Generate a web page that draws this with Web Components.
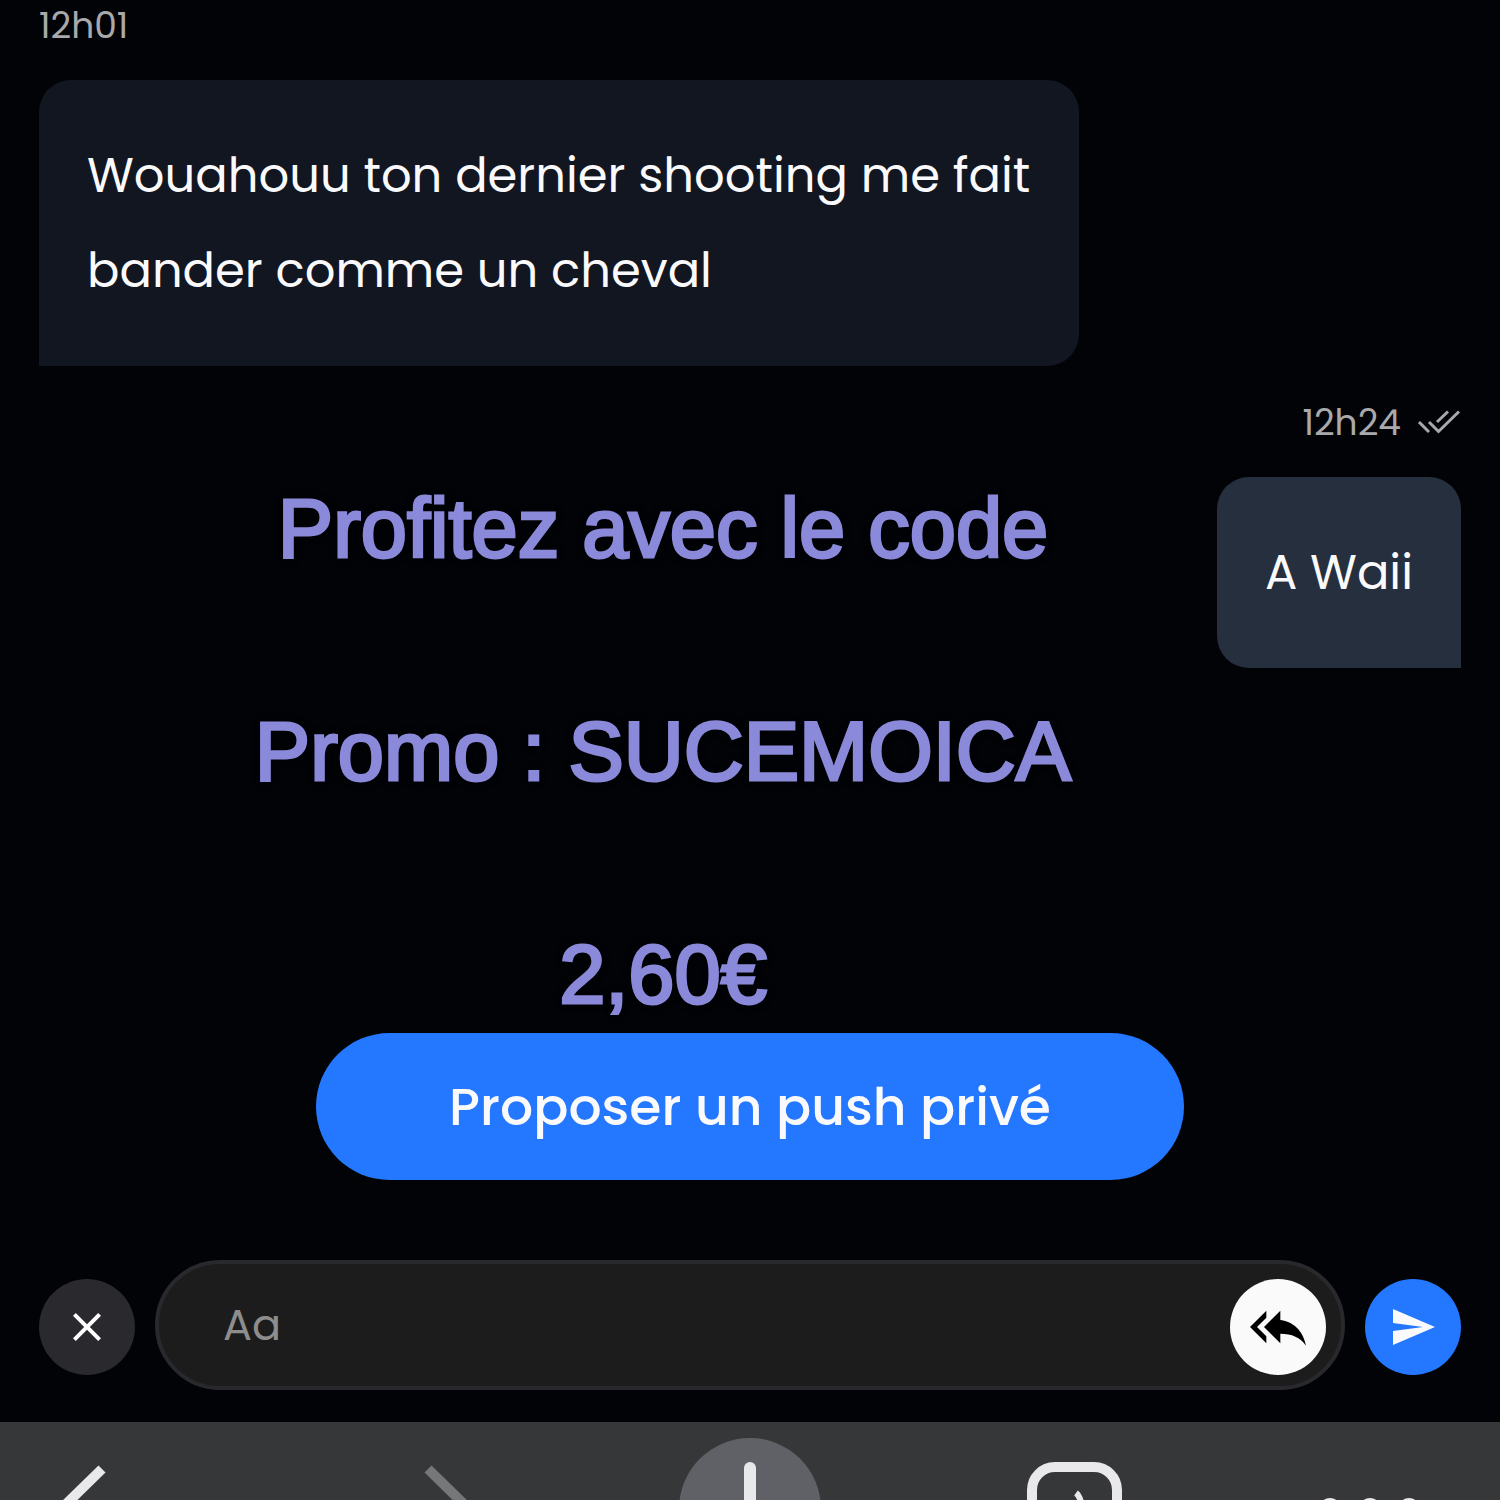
<!DOCTYPE html>
<html lang="fr">
<head>
<meta charset="utf-8">
<meta name="viewport" content="width=device-width, initial-scale=1">
<title>Messages</title>
<style>
  body { margin: 0; background: #020307; }
</style>
</head>
<body>
<chat-page>
  <chat-message time="12h01">Wouahouu ton dernier shooting me fait bander comme un cheval</chat-message>
  <chat-message time="12h24" sent>A Waii</chat-message>
  <promo-overlay slot="overlay">
    <span>Profitez avec le code</span>
    <span>Promo : SUCEMOICA</span>
    <span>2,60€</span>
  </promo-overlay>
  <push-button slot="footer">Proposer un push privé</push-button>
  <chat-composer slot="footer"></chat-composer>
  <browser-bar slot="bar"></browser-bar>
</chat-page>
<script>
const define = (name, html) => customElements.define(name, class extends HTMLElement {
  constructor() {
    super();
    this.attachShadow({ mode: 'open' }).innerHTML = html;
  }
  connectedCallback() {
    const time = this.shadowRoot.querySelector('time');
    if (time) time.textContent = this.getAttribute('time');
  }
});

define('chat-page', `
<style>
  :host { display: flex; flex-direction: column; height: 100vh; overflow: hidden; position: relative;
    background: #020307; color: #fafafc; font-family: Poppins, Inter, sans-serif; }
  main { flex: 1; min-height: 0; padding: 0 39px; display: flex; flex-direction: column; gap: 31px; }
  footer { padding: 0 39px 32px; display: flex; flex-direction: column; align-items: center; gap: 80px; }
</style>
<main><slot></slot></main>
<slot name="overlay"></slot>
<footer><slot name="footer"></slot></footer>
<slot name="bar"></slot>`);

define('chat-message', `
<style>
  :host { display: flex; flex-direction: column; align-items: flex-start; gap: 29px; }
  :host([sent]) { align-items: flex-end; }
  .meta { display: flex; align-items: center; gap: 16px; color: #a9a9ab; font-size: 36px; line-height: 51px; }
  svg { display: none; }
  :host([sent]) svg { display: block; }
  p { margin: 0; box-sizing: border-box; max-width: 1040px; padding: 48px; font-size: 48px; line-height: 95px;
    background: #121620; border-radius: 32px 32px 32px 0; }
  :host([sent]) p { background: #262f3d; border-radius: 32px 32px 0 32px; }
</style>
<div class="meta"><time></time>
  <svg width="44" height="26" viewBox="0 0 44 26" fill="none" stroke="#a9a9ab" stroke-width="3" aria-hidden="true">
    <path d="M2 12 12 22M12 12 21.500 21.500 42 1.500M20 12 31 1.500"/>
  </svg>
</div>
<p><slot></slot></p>`);

define('promo-overlay', `
<style>
  :host { position: absolute; top: 417px; left: 0; width: 1326px; max-width: 100%; text-align: center;
    color: #8a89da; font: 83px/223px "Liberation Sans", sans-serif;
    -webkit-text-stroke: 3px #8a89da; text-shadow: 0 0 8px #000; pointer-events: none; }
  ::slotted(span) { display: block; }
</style>
<slot></slot>`);

define('push-button', `
<style>
  :host { display: flex; width: 868px; max-width: 100%; }
  button { flex: 1; border: 0; border-radius: 74px; height: 147px; padding: 0 32px; background: #2477ff; color: #fafafc;
    font: inherit; font-weight: 500; font-size: 52px; line-height: 64px; }
</style>
<button type="button"><slot></slot></button>`);

define('chat-composer', `
<style>
  :host { display: flex; align-items: flex-end; gap: 20px; width: 100%; }
  button { flex: none; width: 96px; height: 96px; margin: 0 0 15px; border: 0; border-radius: 50%; padding: 0; display: grid; place-items: center; }
  .close { background: #29292e; }
  .reply { background: #fafafa; margin-bottom: 11px; }
  .send { background: #2477ff; }
  .field { flex: 1; min-width: 0; box-sizing: border-box; height: 130px; display: flex; align-items: flex-end;
    border: 4px solid #29292d; border-radius: 65px; background: #1c1c1c; padding: 0 15px 0 64px; }
  input { flex: 1; min-width: 0; align-self: stretch; border: 0; outline: 0; padding: 0; background: none; color: #fafafc;
    font: inherit; font-size: 43px; }
  input::placeholder { color: #8d8d8d; opacity: 1; }
</style>
<button class="close" type="button" aria-label="Fermer">
  <svg width="48" height="48" viewBox="0 0 24 24" fill="#fff"><path d="M19 6.410 17.590 5 12 10.590 6.410 5 5 6.410 10.590 12 5 17.590 6.410 19 12 13.410 17.590 19 19 17.590 13.410 12z"/></svg>
</button>
<div class="field">
  <input type="text" placeholder="Aa" aria-label="Message">
  <button class="reply" type="button" aria-label="Répondre à tous">
    <svg width="56" height="56" viewBox="0 0 24 24"><path d="M7 8V5l-7 7 7 7v-3l-4-4 4-4zm6 1V5l-7 7 7 7v-4.100c5 0 8.500 1.600 11 5.100-1-5-4-10-11-11z"/></svg>
  </button>
</div>
<button class="send" type="button" aria-label="Envoyer">
  <svg width="48" height="48" viewBox="0 0 24 24" fill="#fafafc"><path d="M2 21 23 12 2 3v7l15 2-15 2z"/></svg>
</button>`);

define('browser-bar', `
<style>
  :host { display: block; flex: none; height: 78px; overflow: hidden; background: #363739; }
  nav { display: flex; justify-content: space-between; padding: 0 58px; }
  button { border: 0; padding: 0; background: none; width: 144px; height: 78px; }
  svg { display: block; overflow: visible; fill: none; stroke: #e9e9ec; }
</style>
<nav>
  <button type="button" aria-label="Précédent"><svg width="144" height="78"><path d="M44 47 2 88" stroke-width="10"/></svg></button>
  <button type="button" aria-label="Suivant" disabled><svg width="144" height="78"><path d="M60 47 102 88" stroke="#767779" stroke-width="10"/></svg></button>
  <button type="button" aria-label="Nouvel onglet"><svg width="144" height="78"><circle cx="72" cy="87" r="71" fill="#5f6166" stroke="none"/><path d="M72 46V130" stroke-width="12" stroke-linecap="round"/></svg></button>
  <button type="button" aria-label="Onglets"><svg width="144" height="78"><rect x="44" y="45" width="85" height="85" rx="23" stroke-width="10"/><path d="M88 71Q92 74 94 84" stroke-width="6"/></svg></button>
  <button type="button" aria-label="Menu"><svg width="144" height="78" style="fill:#e9e9ec;stroke:none"><circle cx="32" cy="87" r="11"/><circle cx="72" cy="87" r="11"/><circle cx="111" cy="87" r="11"/></svg></button>
</nav>`);
</script>
</body>
</html>
